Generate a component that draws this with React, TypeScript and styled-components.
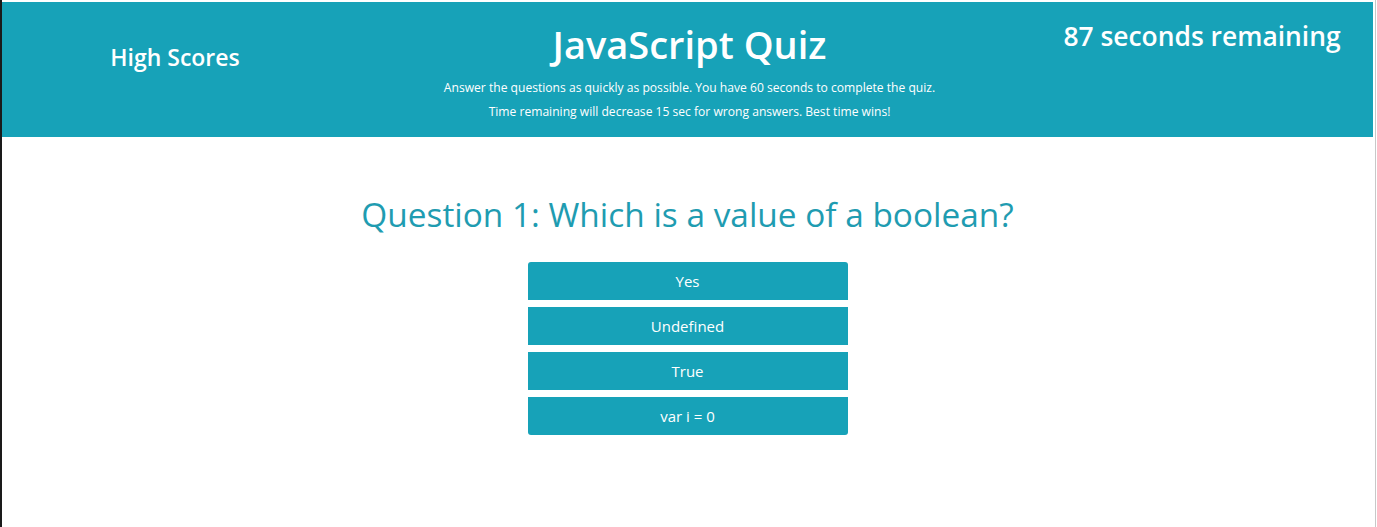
import React from "react";
import styled, { createGlobalStyle } from "styled-components";

const Global = createGlobalStyle`
  html, body { margin: 0; padding: 0; background: #ffffff; }
  body { font-family: "Open Sans", "Noto Sans", sans-serif; }
`;

const Page = styled.div`
  height: 527px;
  box-sizing: border-box;
  border-left: 2px solid #1a1a1a;
  border-right: 1px solid #c8c8c8;
  width: 1376px;
  padding-top: 2px;
  padding-right: 2px;
`;

const Header = styled.header`
  display: grid;
  grid-template-columns: 346px 1fr 342px;
  height: 135px;
  background: #17a2b8;
  color: #ffffff;
`;

const SideLink = styled.a`
  justify-self: center;
  margin-top: 40px;
  font-size: 23px;
  font-weight: 600;
  color: #ffffff;
  text-decoration: none;
  line-height: 30px;
  height: 30px;
`;

const Center = styled.div`
  display: flex;
  flex-direction: column;
  align-items: center;
  padding-top: 16px;
`;

const Title = styled.h1`
  margin: 0 0 6px;
  font-size: 38px;
  font-weight: 600;
  line-height: 52px;
`;

const Sub = styled.p`
  margin: 0;
  font-size: 12.1px;
  line-height: 24px;
`;

const Timer = styled.div`
  justify-self: center;
  margin-top: 16px;
  font-size: 26.4px;
  font-weight: 600;
  line-height: 36px;
  height: 36px;
`;

const Main = styled.main`
  display: flex;
  flex-direction: column;
  align-items: center;
  padding-top: 54px;
`;

const Question = styled.h2`
  margin: 0 0 25px;
  font-size: 33.4px;
  font-weight: 400;
  color: #1f9cb1;
  line-height: 46px;
`;

const Answers = styled.div`
  display: flex;
  flex-direction: column;
  gap: 7px;
  width: 320px;
`;

const Answer = styled.button<{ $first?: boolean; $last?: boolean }>`
  height: 38px;
  border: none;
  background: #17a2b8;
  color: #ffffff;
  font-family: "Open Sans", "Noto Sans", sans-serif;
  font-size: 15px;
  cursor: pointer;
  border-radius: ${(p) =>
    p.$first ? "3px 3px 0 0" : p.$last ? "0 0 3px 3px" : "0"};
`;

const answers = ["Yes", "Undefined", "True", "var i = 0"];

export default function App() {
  return (
    <>
      <Global />
      <Page>
        <Header>
          <SideLink href="#">High Scores</SideLink>
          <Center>
            <Title>JavaScript Quiz</Title>
            <Sub>
              Answer the questions as quickly as possible. You have 60 seconds to complete the quiz.
            </Sub>
            <Sub>Time remaining will decrease 15 sec for wrong answers. Best time wins!</Sub>
          </Center>
          <Timer>87 seconds remaining</Timer>
        </Header>
        <Main>
          <Question>Question 1: Which is a value of a boolean?</Question>
          <Answers>
            {answers.map((a, i) => (
              <Answer key={a} $first={i === 0} $last={i === answers.length - 1}>
                {a}
              </Answer>
            ))}
          </Answers>
        </Main>
      </Page>
    </>
  );
}
